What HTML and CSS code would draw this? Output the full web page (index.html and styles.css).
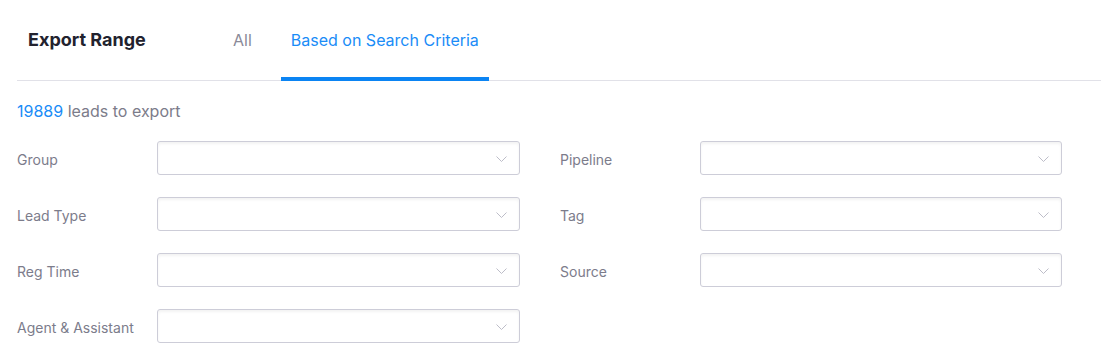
FILE: index.html
```html
<!DOCTYPE html>
<html lang="en">

<head>
  <meta charset="UTF-8" />
  <title>Export Leads</title>
  <link rel="stylesheet" href="styles.css">
</head>

<body>
  <div class="export">
    <!-- 顶部标签 -->
    <div class="header">
      <h3 class="title">Export Range</h3>
      <div class="tab">All</div>
      <div class="tab active">Based on Search Criteria</div>
    </div>
    <p class="count"><span class="num">19889</span> leads to export</p>
    <!-- 筛选条件 -->
    <div class="filters">
      <div class="field">
        <label>Group</label>
        <div class="select"><svg class="arrow" viewBox="0 0 11 6"><polyline points="0.5,0.5 5.5,5.5 10.5,0.5" /></svg></div>
      </div>
      <div class="field">
        <label>Pipeline</label>
        <div class="select"><svg class="arrow" viewBox="0 0 11 6"><polyline points="0.5,0.5 5.5,5.5 10.5,0.5" /></svg></div>
      </div>
      <div class="field">
        <label>Lead Type</label>
        <div class="select"><svg class="arrow" viewBox="0 0 11 6"><polyline points="0.5,0.5 5.5,5.5 10.5,0.5" /></svg></div>
      </div>
      <div class="field">
        <label>Tag</label>
        <div class="select"><svg class="arrow" viewBox="0 0 11 6"><polyline points="0.5,0.5 5.5,5.5 10.5,0.5" /></svg></div>
      </div>
      <div class="field">
        <label>Reg Time</label>
        <div class="select"><svg class="arrow" viewBox="0 0 11 6"><polyline points="0.5,0.5 5.5,5.5 10.5,0.5" /></svg></div>
      </div>
      <div class="field">
        <label>Source</label>
        <div class="select"><svg class="arrow" viewBox="0 0 11 6"><polyline points="0.5,0.5 5.5,5.5 10.5,0.5" /></svg></div>
      </div>
      <div class="field">
        <label>Agent &amp; Assistant</label>
        <div class="select"><svg class="arrow" viewBox="0 0 11 6"><polyline points="0.5,0.5 5.5,5.5 10.5,0.5" /></svg></div>
      </div>
    </div>
  </div>
</body>

</html>
```

FILE: styles.css
```css
body {
  margin: 0;
  padding: 0;
  background-color: #fff;
  font-family: Inter, "Noto Sans", sans-serif;
}

.export {
  padding: 0 19px 0 17px;
}

.header {
  display: flex;
  height: 80px;
  border-bottom: 1px solid #e1e1e8;
}

.title {
  width: 195px;
  margin: 0;
  padding-left: 11px;
  line-height: 80px;
  font-size: 18px;
  font-weight: 700;
  color: #22222e;
}

.tab {
  height: 77px;
  padding: 0 10px;
  margin-right: 19px;
  margin-bottom: -1px;
  line-height: 81px;
  font-size: 16px;
  color: #8a8a98;
  border-bottom: 4px solid transparent;
}

.tab.active {
  color: #1a8cf7;
  border-bottom-color: #0b84f3;
}

.count {
  margin: 20px 0 0;
  height: 20px;
  line-height: 20px;
  font-size: 16px;
  color: #7c7c8a;
}

.count .num {
  color: #1a8cf7;
}

.filters {
  display: grid;
  grid-template-columns: 503px 503px;
  column-gap: 40px;
  row-gap: 22px;
  margin-top: 20px;
}

.field {
  display: flex;
  align-items: center;
  height: 34px;
}

.field label {
  width: 140px;
  flex-shrink: 0;
  padding-top: 2px;
  font-size: 14px;
  color: #7c7c8b;
}

.select {
  position: relative;
  width: 363px;
  height: 34px;
  box-sizing: border-box;
  border: 1px solid #cdcdd8;
  border-radius: 3px;
  box-shadow: inset 0 2px 3px rgba(0, 0, 0, 0.05);
}

.field:nth-child(even) .select {
  width: 362px;
}

.arrow {
  position: absolute;
  right: 12px;
  top: 14px;
  width: 11px;
  height: 6px;
  fill: none;
  stroke: #bdbdc8;
  stroke-width: 1;
}
```
